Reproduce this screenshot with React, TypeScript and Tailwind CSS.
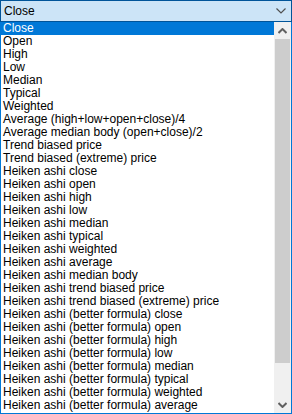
const items = [
  "Close",
  "Open",
  "High",
  "Low",
  "Median",
  "Typical",
  "Weighted",
  "Average (high+low+open+close)/4",
  "Average median body (open+close)/2",
  "Trend biased price",
  "Trend biased (extreme) price",
  "Heiken ashi close",
  "Heiken ashi open",
  "Heiken ashi high",
  "Heiken ashi low",
  "Heiken ashi median",
  "Heiken ashi typical",
  "Heiken ashi weighted",
  "Heiken ashi average",
  "Heiken ashi median body",
  "Heiken ashi trend biased price",
  "Heiken ashi trend biased (extreme) price",
  "Heiken ashi (better formula) close",
  "Heiken ashi (better formula) open",
  "Heiken ashi (better formula) high",
  "Heiken ashi (better formula) low",
  "Heiken ashi (better formula) median",
  "Heiken ashi (better formula) typical",
  "Heiken ashi (better formula) weighted",
  "Heiken ashi (better formula) average",
];

export default function App() {
  return (
    <div
      className="w-[292px] h-[414px] bg-white flex flex-col overflow-hidden text-[12px] text-black"
      style={{ fontFamily: '"Liberation Sans", Arial, sans-serif' }}
    >
      <div className="h-[22px] shrink-0 border border-[#005499] bg-[#cce4f7] flex items-center pl-[3px] pr-[3px]">
        <span className="flex-1 leading-none">Close</span>
        <svg width="10" height="6" viewBox="0 0 10 6" className="mr-[2px]">
          <path d="M0.5 0.5 L5 5 L9.5 0.5" fill="none" stroke="#505050" strokeWidth="1.2" />
        </svg>
      </div>
      <div className="flex-1 flex border-x border-b border-[#0078d7] min-h-0">
        <div className="flex-1 flex flex-col">
          {items.map((t, i) => (
            <div
              key={i}
              className={
                "h-[13px] leading-[13px] pl-[2px] whitespace-nowrap " +
                (i === 0 ? "bg-[#0078d7] text-white" : "")
              }
            >
              {t}
            </div>
          ))}
        </div>
        <div className="w-[17px] shrink-0 bg-[#f0f0f0] flex flex-col">
          <div className="h-[17px] flex items-center justify-center">
            <svg width="9" height="6" viewBox="0 0 9 6">
              <path d="M0.5 5 L4.5 1 L8.5 5" fill="none" stroke="#606060" strokeWidth="2" />
            </svg>
          </div>
          <div className="h-[324px] bg-[#cdcdcd] mx-[1px]" />
          <div className="flex-1" />
          <div className="h-[17px] flex items-center justify-center">
            <svg width="9" height="6" viewBox="0 0 9 6">
              <path d="M0.5 1 L4.5 5 L8.5 1" fill="none" stroke="#606060" strokeWidth="2" />
            </svg>
          </div>
        </div>
      </div>
    </div>
  );
}
